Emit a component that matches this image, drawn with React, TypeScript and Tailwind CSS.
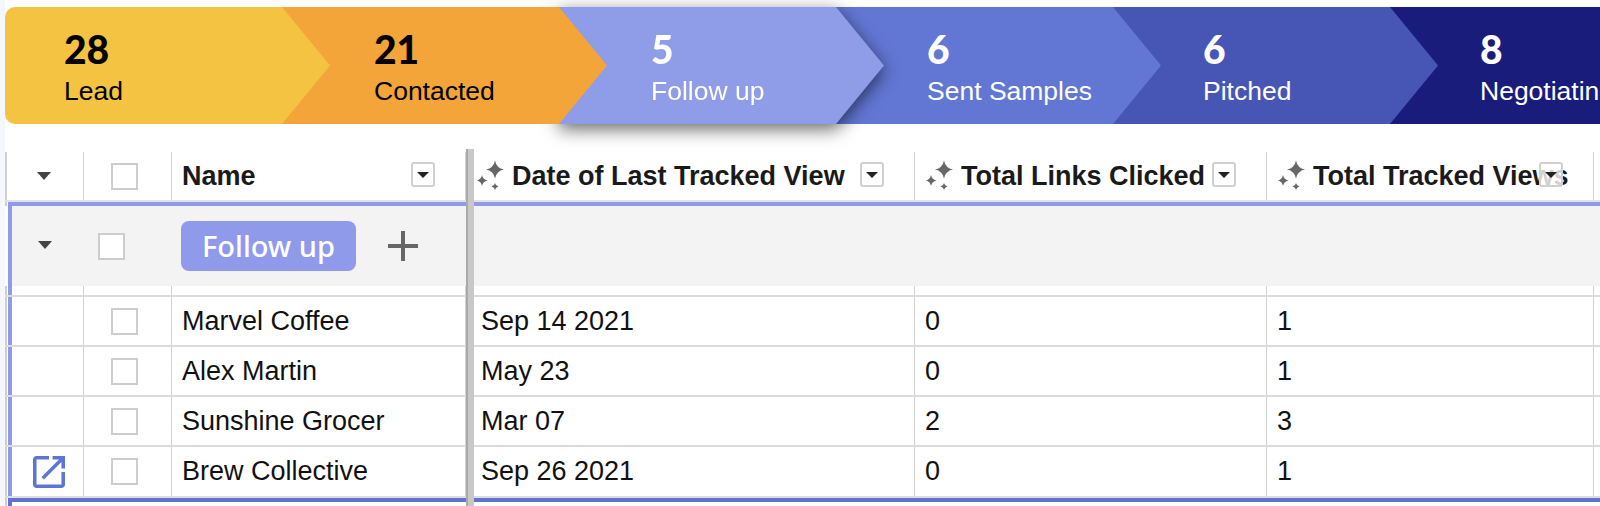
const STEPS = [
  { count: 28, label: "Lead", bg: "bg-[#f3c341]", text: "text-black", z: "z-[6]", pad: "pl-[59px] rounded-l-[10px]", shadow: "" },
  { count: 21, label: "Contacted", bg: "bg-[#f3a53a]", text: "text-black", z: "z-[5]", pad: "pl-[92px]", shadow: "" },
  { count: 5, label: "Follow up", bg: "bg-[#8f9ce8]", text: "text-white", z: "z-[4]", pad: "pl-[92px]", shadow: "drop-shadow-[0_5px_9px_rgba(0,0,0,0.6)]" },
  { count: 6, label: "Sent Samples", bg: "bg-[#6277d4]", text: "text-white", z: "z-[3]", pad: "pl-[91px]", shadow: "" },
  { count: 6, label: "Pitched", bg: "bg-[#4756b4]", text: "text-white", z: "z-[2]", pad: "pl-[90px]", shadow: "" },
  { count: 8, label: "Negotiating", bg: "bg-[#1a1c7c]", text: "text-white", z: "z-[1]", pad: "pl-[90px]", shadow: "" },
];

const ROWS = [
  { name: "Marvel Coffee", date: "Sep 14 2021", links: "0", views: "1", h: "h-[50px]" },
  { name: "Alex Martin", date: "May 23", links: "0", views: "1", h: "h-[50px]" },
  { name: "Sunshine Grocer", date: "Mar 07", links: "2", views: "3", h: "h-[50px]" },
  { name: "Brew Collective", date: "Sep 26 2021", links: "0", views: "1", h: "h-[51px]" },
];

const GRID = "grid grid-cols-[79px_88px_294px_449px_352px_327px_1fr]";
const LINE = "border-r border-[#d2d2d2]";

function Caret() {
  return (
    <svg width="14" height="8" viewBox="0 0 14 8" className="block">
      <path d="M0 0h14L7 8z" fill="#444" />
    </svg>
  );
}

function Checkbox() {
  return <div className="ml-[27px] h-[27px] w-[27px] border-2 border-[#cdcdcd] bg-white" />;
}

function Sparkles() {
  const star = (x: number, y: number, r: number) => {
    const c = r * 0.16;
    return `M${x} ${y - r}Q${x + c} ${y - c} ${x + r} ${y}Q${x + c} ${y + c} ${x} ${y + r}Q${x - c} ${y + c} ${x - r} ${y}Q${x - c} ${y - c} ${x} ${y - r}z`;
  };
  return (
    <svg width="28" height="32" viewBox="0 0 28 32" className="block shrink-0">
      <path d={star(18, 9.5, 9) + star(5, 20.5, 5.5) + star(18, 26.5, 3.5)} fill="#666" />
    </svg>
  );
}

function HeadMenu() {
  return (
    <div className="absolute right-[30px] top-[10px] flex h-[25px] w-[24px] items-center justify-center rounded-[3px] border-2 border-[#d0d0d0] bg-white/80">
      <svg width="12" height="6" viewBox="0 0 12 6" className="block">
        <path d="M0 0h12L6 6z" fill="#222" />
      </svg>
    </div>
  );
}

function HeadCell({ title, line = true }: { title: string; line?: boolean }) {
  return (
    <div className={`relative flex items-center gap-[7px] whitespace-nowrap ${line ? LINE : ""} pl-[11px] text-[27px] font-bold text-[#1a1a1a]`}>
      <Sparkles />
      <span>{title}</span>
      <HeadMenu />
    </div>
  );
}

function Pipeline() {
  return (
    <div className="flex h-[117px] w-full">
      {STEPS.map((s, i) => (
        <div key={s.label} className={`relative w-[325px] shrink-0 ${s.z} ${s.shadow} ${i > 0 ? "-ml-[48px]" : ""}`}>
          <div
            className={`flex h-full flex-col whitespace-nowrap pt-[19px] ${s.bg} ${s.text} ${s.pad} ${
              i < 5 ? "[clip-path:polygon(0_0,277px_0,325px_50%,277px_100%,0_100%)]" : ""
            }`}
          >
            <span className="font-['Lato',sans-serif] text-[39px] font-black leading-[46px]">{s.count}</span>
            <span className="mt-[2px] font-['Liberation_Sans',sans-serif] text-[26.5px] leading-[34px]">{s.label}</span>
          </div>
        </div>
      ))}
    </div>
  );
}

function Table() {
  return (
    <div className="relative mt-[28px] flex-1 border-l-2 border-[#cfcfcf] font-['Liberation_Sans',sans-serif] text-[27px] text-[#111]">
      {/* frozen column divider */}
      <div className="absolute bottom-0 left-[459px] top-[-3px] z-10 w-[8px] border-l-2 border-[#a9a9a9] bg-[#c8c8c8]" />

      <div className={`${GRID} -ml-[2px] h-[50px] border-b-2 border-[#e2e2e2]`}>
        <div className={`flex items-center justify-center ${LINE}`}>
          <Caret />
        </div>
        <div className={`flex items-center ${LINE}`}>
          <Checkbox />
        </div>
        <div className={`relative flex items-center pl-[10px] text-[27px] font-bold text-[#1a1a1a] ${LINE}`}>
          Name
          <HeadMenu />
        </div>
        <HeadCell title="Date of Last Tracked View" />
        <HeadCell title="Total Links Clicked" />
        <HeadCell title="Total Tracked Views" />
      </div>

      <div className="ml-px h-1 bg-[#8f9bea]" />

      {/* group heading */}
      <div className="-ml-[2px] flex h-[80px] items-center bg-white">
        <div className="ml-[3px] h-full w-1 shrink-0 bg-[#8f9bea]" />
        <div className="flex h-full flex-1 items-center bg-[#f3f3f3]">
          <div className="flex w-[160px] shrink-0 items-center">
            <div className="ml-[26px] mr-[27px] -translate-y-[1px]">
              <Caret />
            </div>
            <div className="-ml-[27px] pl-[27px]">
              <div className="ml-[19px] h-[27px] w-[27px] border-2 border-[#cdcdcd] bg-white" />
            </div>
          </div>
          <div className="ml-[9px] flex h-[50px] w-[175px] items-center justify-center rounded-lg bg-[#8f9bea] font-['Noto_Sans',sans-serif] text-[29px] font-medium text-white">
            Follow up
          </div>
          <svg width="30" height="30" viewBox="0 0 30 30" className="ml-[32px] block">
            <path d="M15 0v30M0 15h30" stroke="#666" strokeWidth="4" />
          </svg>
        </div>
      </div>

      {/* gap under the group heading */}
      <div className={`${GRID} -ml-[2px] h-[11px] border-b-2 border-[#dcdcdc]`}>
        <div className={LINE}>
          <div className="ml-[3px] h-full w-1 bg-[#8f9bea]" />
        </div>
        <div className={LINE} />
        <div className={LINE} />
        <div className={LINE} />
        <div className={LINE} />
        <div className={LINE} />
      </div>

      {ROWS.map((r, i) => (
        <div key={r.name} className={`${GRID} -ml-[2px] ${r.h} border-b-2 border-[#dcdcdc]`}>
          <div className={`flex items-center ${LINE}`}>
            <div className="ml-[3px] h-full w-1 bg-[#8f9bea]" />
            {i === 3 && (
              <svg width="32" height="32" viewBox="3 3 18 18" className="ml-[21px] block">
                <path
                  d="M19 19H5V5h7V3H5c-1.11 0-2 .9-2 2v14c0 1.1.89 2 2 2h14c1.1 0 2-.9 2-2v-7h-2v7zM14 3v2h3.59l-9.83 9.83 1.41 1.41L19 6.41V10h2V3h-7z"
                  fill="#5f75d6"
                />
              </svg>
            )}
          </div>
          <div className={`flex items-center ${LINE}`}>
            <Checkbox />
          </div>
          <div className={`flex items-center pl-[10px] ${LINE}`}>{r.name}</div>
          <div className={`flex items-center pl-[15px] ${LINE}`}>{r.date}</div>
          <div className={`flex items-center pl-[10px] ${LINE}`}>{r.links}</div>
          <div className={`flex items-center pl-[10px] ${LINE}`}>{r.views}</div>
        </div>
      ))}

      <div className="ml-px h-1 bg-[#5f73d3]" />
      <div className="ml-px h-1 w-1 bg-[#5f73d3]" />
    </div>
  );
}

export default function App() {
  return (
    <div className="flex h-[506px] w-[1600px] overflow-hidden bg-white">
      <div className="w-[5px] shrink-0 bg-[#f4f7fe]" />
      <div className="flex min-w-0 flex-1 flex-col pt-[7px]">
        <Pipeline />
        <Table />
      </div>
    </div>
  );
}
